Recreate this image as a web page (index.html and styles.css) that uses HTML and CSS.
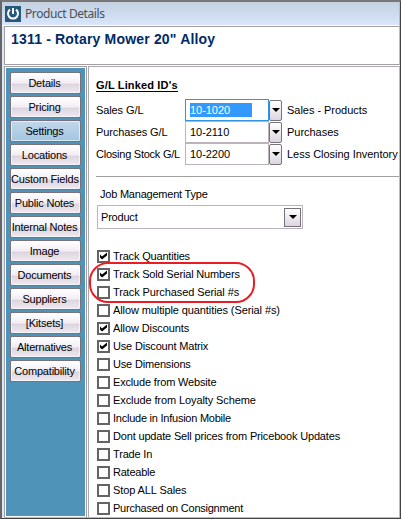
FILE: index.html
```
<!DOCTYPE html>
<html lang="en">
<head>
<meta charset="utf-8">
<title>Product Details</title>
<link rel="stylesheet" href="styles.css">
</head>
<body>
<div class="window">
  <header class="titlebar">
    <svg class="logo" width="16" height="16" viewBox="0 0 16 16"><rect width="16" height="16" fill="#27597b"/><path d="M5 3.6A5 5 0 1 0 11 3.6" fill="none" stroke="#fff" stroke-width="2"/><path d="M8 2v6" stroke="#fff" stroke-width="2"/></svg>
    <span class="caption">Product Details</span>
  </header>
  <div class="heading"><h1>1311 - Rotary Mower 20" Alloy</h1></div>
  <div class="body">
    <nav class="sidebar">
      <button>Details</button>
      <button>Pricing</button>
      <button class="active">Settings</button>
      <button>Locations</button>
      <button>Custom Fields</button>
      <button>Public Notes</button>
      <button>Internal Notes</button>
      <button>Image</button>
      <button>Documents</button>
      <button>Suppliers</button>
      <button>[Kitsets]</button>
      <button>Alternatives</button>
      <button>Compatibility</button>
    </nav>
    <main class="panel">
      <h2>G/L Linked ID's</h2>
      <div class="accounts">
        <div class="account"><span class="label">Sales G/L</span><div class="field focus"><span class="selected">10-1020</span></div><i class="drop"></i><span class="desc">Sales - Products</span></div>
        <div class="account"><span class="label">Purchases G/L</span><div class="field">10-2110</div><i class="drop"></i><span class="desc">Purchases</span></div>
        <div class="account"><span class="label tight">Closing Stock G/L</span><div class="field">10-2200</div><i class="drop"></i><span class="desc">Less Closing Inventory</span></div>
      </div>
      <hr>
      <div class="job">Job Management Type</div>
      <div class="select"><span>Product</span><i class="drop"></i></div>
      <div class="options">
        <div class="option"><i class="box on"></i><span>Track Quantities</span></div>
        <div class="option"><i class="box on"></i><span>Track Sold Serial Numbers</span></div>
        <div class="option wide"><i class="box"></i><span>Track Purchased Serial #s</span></div>
        <div class="option wide"><i class="box"></i><span>Allow multiple quantities (Serial #s)</span></div>
        <div class="option wide"><i class="box on"></i><span>Allow Discounts</span></div>
        <div class="option"><i class="box on"></i><span>Use Discount Matrix</span></div>
        <div class="option"><i class="box"></i><span>Use Dimensions</span></div>
        <div class="option"><i class="box"></i><span>Exclude from Website</span></div>
        <div class="option wide"><i class="box"></i><span>Exclude from Loyalty Scheme</span></div>
        <div class="option tight"><i class="box"></i><span>Include in Infusion Mobile</span></div>
        <div class="option"><i class="box"></i><span>Dont update Sell prices from Pricebook Updates</span></div>
        <div class="option"><i class="box"></i><span>Trade In</span></div>
        <div class="option tight"><i class="box"></i><span>Rateable</span></div>
        <div class="option wide"><i class="box"></i><span>Stop ALL Sales</span></div>
        <div class="option tight"><i class="box"></i><span>Purchased on Consignment</span></div>
        <div class="callout"></div>
      </div>
    </main>
  </div>
</div>
</body>
</html>
```
FILE: styles.css
```
* { box-sizing: border-box; }
body { margin: 0; font: 11px/13px "Liberation Sans", Arial, sans-serif; color: #000; overflow: hidden; }
.window {
  width: 401px; height: 519px; display: flex; flex-direction: column;
  border: 1px solid #444; border-top: 2px solid #777; border-left: 2px solid #666;
  background: #dce6f7; overflow: hidden; white-space: nowrap;
}
.titlebar { height: 24px; flex: none; display: flex; align-items: center; padding: 0 0 1px 3px; gap: 4px; background: linear-gradient(#c2d0e0, #d9e6fb 23px, #fff 23px); border-right: 1px solid #bbb; }
.caption { font: 12px/16px "Noto Sans", sans-serif; color: #46505c; letter-spacing: -0.42px; }
.heading { height: 39px; flex: none; margin-left: 2px; background: #fff; border: 1px solid #a29ea4; border-right-color: #bbb; padding: 4px 0 0 6px; }
h1 { margin: 0; font-size: 14px; line-height: 17px; color: #002b66; letter-spacing: 0.18px; }
.body { flex: 1; display: flex; margin-left: 2px; background: #fff; padding-top: 1px; min-height: 0; border-bottom: 1px solid #bbb; }
.sidebar { width: 83px; border: 1px solid #a29ea4; border-bottom: 0; padding: 5px 0 0 5px; display: flex; flex-direction: column; gap: 2px; background: #5093b9; box-shadow: inset 0 0 0 1px #fff; }
button { width: 71px; height: 22px; flex: none; padding: 0 2px 0 0; border: 1px solid #77727b; border-radius: 2px; background: linear-gradient(#fff 0, #f3edf5 50%, #dcd5df 55%, #eee8ef 100%); box-shadow: inset 0 0 0 1px #fff9; font: inherit; color: #000; letter-spacing: -0.2px; }
.active { background: linear-gradient(#c1d7ea, #a4c5e0); }
.panel { flex: 1; margin-left: 1px; border: 1px solid #a9a9a9; border-right-color: #bbb; border-bottom: 0; padding: 12px 0 0 7px; }
h2 { width: max-content; margin: 0; height: 13px; font-size: 11px; line-height: 12px; border-bottom: 1px solid #000; letter-spacing: 0.15px; }
.accounts { margin-top: 7px; display: flex; flex-direction: column; }
.account { display: flex; height: 22px; align-items: center; }
.label { width: 89px; flex: none; letter-spacing: -0.1px; }
.field { width: 84px; height: 22px; display: flex; align-items: center; padding-left: 4px; border: 1px solid #bcb4ba; letter-spacing: -0.05px; }
.focus { border-color: #3292e5; }
.selected { width: 62px; height: 14px; line-height: 14px; background: #3399ff; color: #fff; }
.drop { flex: none; width: 13px; height: 21px; border: 1px solid #77727b; border-radius: 2px; background: linear-gradient(#fff, #dcd5df); display: flex; align-items: center; justify-content: center; }
.drop::after { content: ""; border: 4px solid transparent; border-top-color: #000; border-bottom: 0; }
.desc { margin-left: 5px; letter-spacing: -0.03px; }
hr { margin: 11px 0 0; border: 0; height: 1px; background: #a0a0a0; }
.job { margin: 11px 0 0 4px; letter-spacing: -0.22px; }
.select { width: 206px; height: 24px; margin: 4px 0 0 1px; display: flex; align-items: center; justify-content: space-between; padding: 0 1px 0 3px; border: 1px solid #bcb4ba; letter-spacing: -0.2px; }
.select .drop { width: 17px; height: 19px; border-radius: 0; }
.options { position: relative; margin: 18px 0 0 1px; }
.option { display: flex; height: 18px; align-items: center; gap: 3px; letter-spacing: -0.17px; }
.option.wide { letter-spacing: -0.1px; }
.tight, .option.tight { letter-spacing: -0.24px; }
.box { width: 13px; height: 13px; border: 2px solid #646464; flex: none; }
.on::after { content: ""; display: block; width: 9px; height: 9px; background: #000; clip-path: polygon(1px 3px, 3px 5px, 8px 1px, 8px 4px, 3px 8px, 1px 6px); }
.callout { position: absolute; left: -8px; top: 15px; width: 166px; height: 41px; border: 2px solid #ed1c24; border-radius: 19px; }
```
